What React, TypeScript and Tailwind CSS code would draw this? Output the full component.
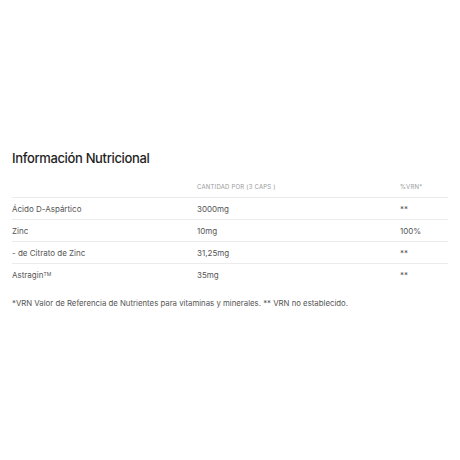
const rows = [
  { name: 'Ácido D-Aspártico', amount: '3000mg', vrn: '**' },
  { name: 'Zinc', amount: '10mg', vrn: '100%' },
  { name: '- de Citrato de Zinc', amount: '31,25mg', vrn: '**' },
  { name: 'Astragin', tm: true, amount: '35mg', vrn: '**' },
];

export default function App() {
  return (
    <div
      className="w-[460px] h-[460px] bg-white px-3 pt-[149px] text-[#444]"
      style={{ fontFamily: 'Inter, "Noto Sans", sans-serif' }}
    >
      <h2 className="text-[13px] leading-[18px] font-medium text-[#1f1f1f] tracking-[-0.35px]">
        Información Nutricional
      </h2>

      <div className="mt-[9px] w-[436px]">
        {/* Header */}
        <div className="flex h-[22px] items-center border-b border-[#ececec] text-[6px] uppercase tracking-[0.2px] text-[#9a9a9a]">
          <div className="w-[185px]" />
          <div className="w-[203px]">Cantidad por (3 caps )</div>
          <div className="normal-case">%VRN*</div>
        </div>

        {rows.map((r, i) => (
          <div
            key={r.name}
            className={`flex h-[22px] items-center text-[8px] text-[#555] ${
              i < rows.length - 1 ? 'border-b border-[#ececec]' : ''
            }`}
          >
            <div className="w-[185px]">
              {r.name}
              {r.tm && <sup className="text-[5px]">TM</sup>}
            </div>
            <div className="w-[203px]">{r.amount}</div>
            <div>{r.vrn}</div>
          </div>
        ))}
      </div>

      <p className="mt-[12px] text-[7.8px] text-[#555]">
        *VRN Valor de Referencia de Nutrientes para vitaminas y minerales. ** VRN no establecido.
      </p>
    </div>
  );
}
